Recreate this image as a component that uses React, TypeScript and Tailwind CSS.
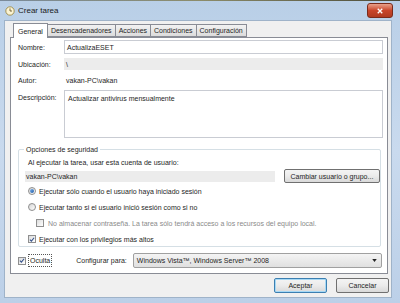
import type { ReactNode } from 'react'

function Check({ checked }: { checked?: boolean }) {
  return (
    <span className="inline-flex h-[8px] w-[8px] shrink-0 items-center justify-center border border-[#8f8f8f] bg-gradient-to-br from-[#dcdcdc] to-white">
      {checked ? (
        <svg viewBox="0 0 8 8" className="h-[7px] w-[7px]">
          <path d="M1.2 4.2 L3.2 6.2 L6.8 1.6" fill="none" stroke="#33508a" strokeWidth="1.4" />
        </svg>
      ) : null}
    </span>
  )
}

function Radio({ checked }: { checked?: boolean }) {
  return (
    <span className="inline-flex h-[8px] w-[8px] shrink-0 items-center justify-center rounded-full border border-[#8f8f8f] bg-gradient-to-br from-[#d6d6d6] to-white">
      {checked ? <span className="h-[4px] w-[4px] rounded-full bg-gradient-to-br from-[#7fb4ea] to-[#1a5aa8]" /> : null}
    </span>
  )
}

function Tab({ children, active }: { children: ReactNode; active?: boolean }) {
  return (
    <div
      className={
        active
          ? 'relative z-10 -mb-px flex h-[15px] items-center border border-b-0 border-[#898c95] bg-white px-[4px]'
          : '-ml-px flex h-[13px] items-center border border-[#898c95] bg-gradient-to-b from-[#f2f2f2] to-[#dcdcdc] px-[3px]'
      }
    >
      {children}
    </div>
  )
}

function Button({ children, focused }: { children: ReactNode; focused?: boolean }) {
  return (
    <div
      className={
        'flex h-[15px] w-[53px] items-center justify-center rounded-[2px] border bg-gradient-to-b from-[#f4f4f4] via-[#ebebeb] to-[#d9d9d9] ' +
        (focused ? 'border-[#3c7fb1] shadow-[inset_0_0_0_1px_#a7d9f5]' : 'border-[#707070]')
      }
    >
      {children}
    </div>
  )
}

export default function App() {
  return (
    <div className="relative h-[303px] w-[400px] overflow-hidden bg-gradient-to-b from-[#b9cfe7] via-[#c9daee] to-[#bcd0e8] text-[7px] leading-none text-[#1e1e1e] [font-family:'Liberation_Sans',Arial,sans-serif]">
      <div className="h-px bg-gradient-to-r from-[#7a8a9a] via-[#8c8c6a] to-[#4a4a38]" />
      <div className="flex h-[19px] items-center pl-[5px] pr-[7px]">
        <svg viewBox="0 0 10 10" className="h-[10px] w-[10px]">
          <circle cx="5" cy="5" r="4.2" fill="#fbf3d2" stroke="#9b8a4a" strokeWidth="0.9" />
          <path d="M5 2.4 V5 H7" fill="none" stroke="#5a4a20" strokeWidth="0.8" />
        </svg>
        <span className="ml-[3px] text-[8px] text-[#1a1a1a]">Crear tarea</span>
        <div className="ml-auto flex h-[15px] w-[26px] items-center justify-center rounded-[3px] border border-[#7a2a1a] bg-gradient-to-b from-[#e8a08a] via-[#c9452a] to-[#b03a20]">
          <svg viewBox="0 0 8 8" className="h-[6px] w-[6px]">
            <path d="M1 1 L7 7 M7 1 L1 7" stroke="white" strokeWidth="1.8" />
          </svg>
        </div>
      </div>

      <div className="ml-[4px] mr-[8px] h-[278px] border border-[#9fb3c9] bg-[#f0f0f0]">
        <div className="flex items-end pl-[8px] pt-[2px]">
          <Tab active>General</Tab>
          <Tab>Desencadenadores</Tab>
          <Tab>Acciones</Tab>
          <Tab>Condiciones</Tab>
          <Tab>Configuración</Tab>
        </div>

        <div className="ml-[5px] h-[237px] w-[378px] border border-[#898c95] bg-white pl-[7px] pr-[4px] pt-[2px]">
          <div className="flex items-center">
            <span className="w-[46px]">Nombre:</span>
            <div className="flex h-[14px] flex-1 items-center border border-[#c9ccd3] pl-[2px]">ActualizaESET</div>
          </div>
          <div className="mt-[4px] flex items-center">
            <span className="w-[46px]">Ubicación:</span>
            <div className="flex h-[12px] flex-1 items-center bg-[#ececec] pl-[2px]">\</div>
          </div>
          <div className="mt-[4px] flex h-[12px] items-center">
            <span className="w-[46px]">Autor:</span>
            <span className="pl-[2px]">vakan-PC\vakan</span>
          </div>
          <div className="mt-[4px] flex items-start">
            <span className="w-[46px] pt-[4px]">Descripción:</span>
            <div className="h-[48px] flex-1 border border-[#c9ccd3] pl-[3px] pt-[4px]">Actualizar antivirus mensualmente</div>
          </div>

          <div className="relative mt-[11px] mr-[2px] h-[98px] rounded-[2px] border border-[#d5dfe5] pl-[9px] pt-[9px]">
            <span className="absolute -top-[4px] left-[5px] bg-white px-[2px]">Opciones de seguridad</span>
            <div>Al ejecutar la tarea, usar esta cuenta de usuario:</div>
            <div className="mt-[3px] flex items-center">
              <div className="flex h-[11px] w-[252px] items-center bg-[#ececec] pl-[1px] -ml-[3px]">vakan-PC\vakan</div>
              <div className="ml-[9px] flex h-[14px] w-[97px] items-center justify-center rounded-[2px] border border-[#707070] bg-gradient-to-b from-[#f4f4f4] via-[#ebebeb] to-[#d9d9d9]">
                Cambiar usuario o grupo...
              </div>
            </div>
            <div className="mt-[4px] flex items-center gap-[3px]">
              <Radio checked />
              <span>Ejecutar sólo cuando el usuario haya iniciado sesión</span>
            </div>
            <div className="mt-[8px] flex items-center gap-[3px]">
              <Radio />
              <span>Ejecutar tanto si el usuario inició sesión como si no</span>
            </div>
            <div className="ml-[8px] mt-[8px] flex items-center gap-[4px] text-[#8a8a8a]">
              <Check />
              <span>No almacenar contraseña. La tarea sólo tendrá acceso a los recursos del equipo local.</span>
            </div>
            <div className="mt-[8px] flex items-center gap-[3px]">
              <Check checked />
              <span>Ejecutar con los privilegios más altos</span>
            </div>
          </div>

          <div className="mt-[6px] flex items-center">
            <Check checked />
            <span className="ml-[2px] border border-dotted border-[#555] px-[1px] py-[2px]">Oculta</span>
            <span className="ml-[24px]">Configurar para:</span>
            <div className="ml-[6px] flex h-[15px] w-[249px] items-center rounded-[2px] border border-[#a0a0a0] bg-gradient-to-b from-[#f4f4f4] to-[#e0e0e0] pl-[3px] pr-[4px]">
              <span>Windows Vista™, Windows Server™ 2008</span>
              <svg viewBox="0 0 6 4" className="ml-auto h-[3px] w-[5px]">
                <path d="M0 0 H6 L3 4 Z" fill="#222" />
              </svg>
            </div>
          </div>
        </div>

        <div className="mr-[2px] mt-[4px] flex justify-end gap-[9px]">
          <Button focused>Aceptar</Button>
          <Button>Cancelar</Button>
        </div>
      </div>
    </div>
  )
}
